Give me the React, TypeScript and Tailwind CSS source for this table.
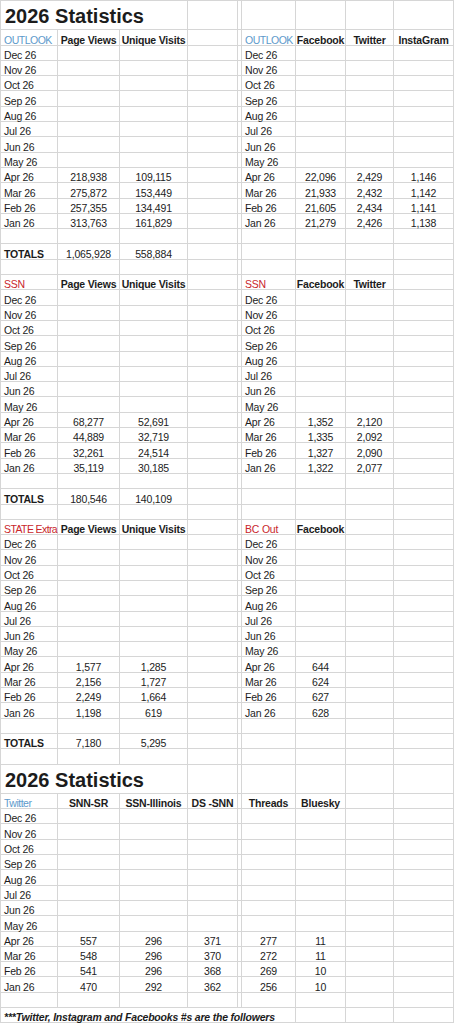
import React from "react";

const months = ["Dec 26", "Nov 26", "Oct 26", "Sep 26", "Aug 26", "Jul 26", "Jun 26", "May 26", "Apr 26", "Mar 26", "Feb 26", "Jan 26"];

type Kind = "label" | "num" | "head" | "blue" | "red" | "total";
type Cell = { t?: string; k?: Kind; x?: string };

const E: Cell = {};
const L = (t: string): Cell => ({ t, k: "label" });
const N = (t?: string): Cell => ({ t, k: "num" });
const H = (t: string): Cell => ({ t, k: "head" });
const B = (t: string): Cell => ({ t, k: "blue" });
const R = (t: string, x?: string): Cell => ({ t, k: "red", x });
const T = (t: string): Cell => ({ t, k: "total" });

const kindCls: Record<Kind, string> = {
    label: "justify-start pl-[3px]",
    num: "justify-center",
    head: "justify-center font-bold",
    blue: "justify-start pl-[3px] text-[#5d9acb] tracking-[-0.5px]",
    red: "justify-start pl-[3px] text-[#c9262b]",
    total: "justify-start pl-[3px] font-bold",
};

const cols = "grid grid-cols-[57px_62px_68px_50px_4px_54px_50px_48px_60px] h-[15.31px]";
const cellBase = "flex items-end border-r border-b border-[#d6d6d6] leading-[10px] whitespace-nowrap";

// last four months have numbers, the rest are empty
const monthRows = (left: string[][], right: string[][]): Cell[][] =>
    months.map((m, i) => {
        const l = i >= 8 ? left[i - 8] : [];
        const r = i >= 8 ? right[i - 8] : [];
        return [L(m), N(l[0]), N(l[1]), E, E, L(m), N(r[0]), N(r[1]), N(r[2])];
    });

const blank: Cell[] = [E, E, E, E, E, E, E, E, E];

const topRows: Cell[][] = [
    [B("OUTLOOK"), H("Page Views"), H("Unique Visits"), E, E, B("OUTLOOK"), H("Facebook"), H("Twitter"), H("InstaGram")],
    ...monthRows(
        [["218,938", "109,115"], ["275,872", "153,449"], ["257,355", "134,491"], ["313,763", "161,829"]],
        [["22,096", "2,429", "1,146"], ["21,933", "2,432", "1,142"], ["21,605", "2,434", "1,141"], ["21,279", "2,426", "1,138"]]
    ),
    blank,
    [T("TOTALS"), N("1,065,928"), N("558,884"), E, E, E, E, E, E],
    blank,
    [R("SSN"), H("Page Views"), H("Unique Visits"), E, E, R("SSN"), H("Facebook"), H("Twitter"), E],
    ...monthRows(
        [["68,277", "52,691"], ["44,889", "32,719"], ["32,261", "24,514"], ["35,119", "30,185"]],
        [["1,352", "2,120"], ["1,335", "2,092"], ["1,327", "2,090"], ["1,322", "2,077"]]
    ),
    blank,
    [T("TOTALS"), N("180,546"), N("140,109"), E, E, E, E, E, E],
    blank,
    [R("STATE Extra", "tracking-[-0.6px] pl-[2px]"), H("Page Views"), H("Unique Visits"), E, E, R("BC Out"), H("Facebook"), E, E],
    ...monthRows(
        [["1,577", "1,285"], ["2,156", "1,727"], ["2,249", "1,664"], ["1,198", "619"]],
        [["644"], ["624"], ["627"], ["628"]]
    ),
    blank,
    [T("TOTALS"), N("7,180"), N("5,295"), E, E, E, E, E, E],
    blank,
];

const twitterData: Record<string, string[]> = {
    "Apr 26": ["557", "296", "371", "277", "11"],
    "Mar 26": ["548", "296", "370", "272", "11"],
    "Feb 26": ["541", "296", "368", "269", "10"],
    "Jan 26": ["470", "292", "362", "256", "10"],
};

const bottomRows: Cell[][] = [
    [B("Twitter"), H("SNN-SR"), H("SSN-Illinois"), H("DS -SNN"), E, H("Threads"), H("Bluesky"), E, E],
    ...months.map((m) => {
        const d = twitterData[m] || [];
        return [L(m), N(d[0]), N(d[1]), N(d[2]), E, N(d[3]), N(d[4]), E, E];
    }),
    blank,
];

const Row = ({ cells }: { cells: Cell[] }) => (
    <div className={cols}>
        {cells.map((c, i) => (
            <div key={i} className={`${cellBase} ${kindCls[c.k || "label"]} ${c.x || ""}`}>
                {c.t}
            </div>
        ))}
    </div>
);

const TitleRow = () => (
    <div className="grid grid-cols-[57px_62px_68px_50px_4px_54px_50px_48px_60px] h-[29.3px]">
        <div className="col-span-3 flex items-end pl-[4px] pb-[3px] border-r border-b border-[#d6d6d6] text-[20px] leading-[20px] font-bold tracking-normal whitespace-nowrap">
            2026 Statistics
        </div>
        {[0, 1, 2, 3, 4, 5].map((i) => (
            <div key={i} className="border-r border-b border-[#d6d6d6]" />
        ))}
    </div>
);

const App = () => {
    return (
        <div
            className="w-[454px] min-h-[1023px] bg-white text-[#1c1c1c] text-[10.5px] tracking-[-0.2px] border-l border-t border-[#d6d6d6] overflow-hidden"
            style={{ fontFamily: '"Liberation Sans", Arial, sans-serif' }}
        >
            <TitleRow />
            {topRows.map((r, i) => (
                <Row key={i} cells={r} />
            ))}

            <TitleRow />
            {bottomRows.map((r, i) => (
                <Row key={i} cells={r} />
            ))}

            {/* footnote spills across the first columns */}
            <div className={cols}>
                <div className={`${cellBase} col-span-6 pl-[3px] font-bold italic`}>
                    ***Twitter, Instagram and Facebooks #s are the followers
                </div>
                <div className={cellBase} />
                <div className={cellBase} />
                <div className={cellBase} />
            </div>
        </div>
    );
};

export default App;
